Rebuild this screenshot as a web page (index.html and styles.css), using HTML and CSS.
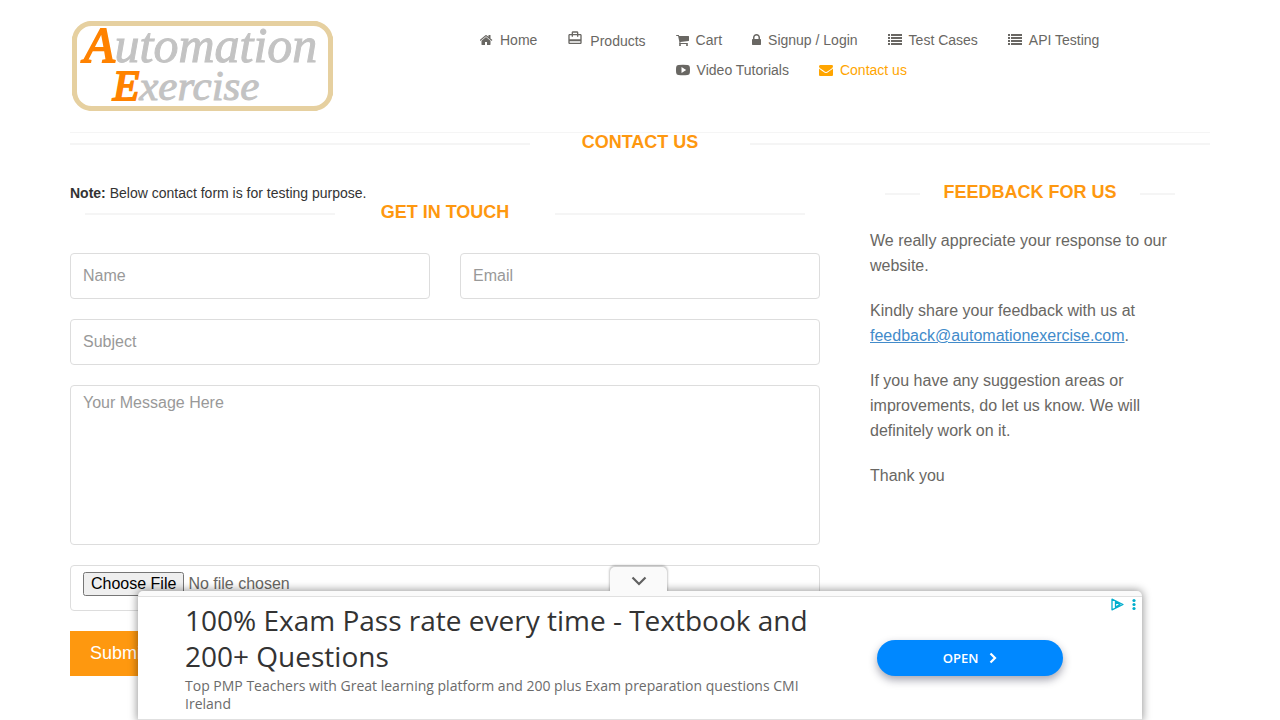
FILE: index.html
```html
<!DOCTYPE html>
<html lang="en">
<head>
<meta charset="utf-8">
<meta name="viewport" content="width=device-width, initial-scale=1">
<title>Automation Exercise - Contact Us</title>
<link rel="stylesheet" href="styles.css">
</head>
<body>
<header class="container header">
  <a class="logo" href="#" aria-label="Automation Exercise">
    <svg width="262" height="90" viewBox="0 0 262 90">
      <path d="M18 2.500H244L258.500 17V73L244 87.500H18L2.500 73V17Z" fill="#fff" stroke="#e6d0a0" stroke-width="5" stroke-linejoin="round"/>
      <rect x="2.500" y="2.500" width="256" height="85" rx="17" fill="#fff" stroke="#e6d0a0" stroke-width="5"/>
      <text class="logo-text" x="12" y="41" font-size="50"><tspan class="logo-initial">A</tspan>utomation</text>
      <text class="logo-text" x="41" y="79" font-size="43"><tspan class="logo-initial">E</tspan>xercise</text>
    </svg>
  </a>
  <nav class="nav">
    <ul class="nav-list">
      <li class="nav-item"><a class="nav-link" href="#"><svg width="13" height="14" viewBox="64 0 1664 1792"><path d="M1408 992v480q0 26-19 45t-45 19h-384v-384h-256v384h-384q-26 0-45-19t-19-45v-480q0-1 .5-3t.5-3l575-474 575 474q1 2 1 6zm223-69l-62 74q-8 9-21 11h-3q-13 0-21-7l-692-577-692 577q-12 8-24 7-13-2-21-11l-62-74q-8-10-7-23.500t11-21.500l719-599q32-26 76-26t76 26l244 204v-195q0-14 9-23t23-9h192q14 0 23 9t9 23v408l219 182q10 8 11 21.500t-7 23.500z"/></svg>Home</a></li>
      <li class="nav-item nav-item-tall"><a class="nav-link" href="#"><svg class="icon-bag" width="16" height="16" viewBox="0 0 24 24"><path d="M20 6h-3V4c0-1.110-.89-2-2-2H9c-1.110 0-2 .89-2 2v2H4c-1.110 0-2 .89-2 2v11c0 1.110.89 2 2 2h16c1.110 0 2-.89 2-2V8c0-1.110-.89-2-2-2zM9 4h6v2H9V4zm11 15H4v-2h16v2zm0-5H4V8h3v2h2V8h6v2h2V8h3v6z"/></svg>Products</a></li>
      <li class="nav-item"><a class="nav-link" href="#"><svg width="13" height="14" viewBox="64 0 1664 1792"><path d="M704 1536q0 52-38 90t-90 38-90-38-38-90 38-90 90-38 90 38 38 90zm896 0q0 52-38 90t-90 38-90-38-38-90 38-90 90-38 90 38 38 90zm128-1088v512q0 24-16.500 42.500t-40.500 21.500l-1044 122q13 60 13 70 0 16-24 64h920q26 0 45 19t19 45-19 45-45 19h-1024q-26 0-45-19t-19-45q0-11 8-31.500t16-36 21.500-40 15.500-29.500l-177-823h-204q-26 0-45-19t-19-45 19-45 45-19h256q16 0 28.500 6.500t19.500 15.500 13 24.500 8 26 5.500 29.500 4.500 26h1201q26 0 45 19t19 45z"/></svg>Cart</a></li>
      <li class="nav-item"><a class="nav-link" href="#"><svg width="9" height="14" viewBox="320 0 1152 1792"><path d="M640 768h512v-192q0-106-75-181t-181-75-181 75-75 181v192zm832 96v576q0 40-28 68t-68 28h-960q-40 0-68-28t-28-68v-576q0-40 28-68t68-28h32v-192q0-184 132-316t316-132 316 132 132 316v192h32q40 0 68 28t28 68z"/></svg>Signup / Login</a></li>
      <li class="nav-item"><a class="nav-link" href="#"><svg width="14" height="14" viewBox="0 0 14 14"><path d="M0 1h2v2H0zM3 1h11v2H3zM0 4h2v2H0zM3 4h11v2H3zM0 7h2v2H0zM3 7h11v2H3zM0 10h2v2H0zM3 10h11v2H3z"/></svg>Test Cases</a></li>
      <li class="nav-item"><a class="nav-link" href="#"><svg width="14" height="14" viewBox="0 0 14 14"><path d="M0 1h2v2H0zM3 1h11v2H3zM0 4h2v2H0zM3 4h11v2H3zM0 7h2v2H0zM3 7h11v2H3zM0 10h2v2H0zM3 10h11v2H3z"/></svg>API Testing</a></li>
      <li class="nav-item"><a class="nav-link" href="#"><svg width="14" height="14" viewBox="0 0 14 14"><path fill-rule="evenodd" d="M2.500 2Q7 1.600 11.500 2Q13.600 2.100 13.800 4Q14.200 7 13.800 10Q13.600 11.900 11.500 12Q7 12.400 2.500 12Q.4 11.900.2 10Q-.2 7 .2 4Q.4 2.100 2.500 2zM5.500 4v6l4.700-3z"/></svg>Video Tutorials</a></li>
      <li class="nav-item"><a class="nav-link active" href="#" aria-current="page"><svg width="14" height="14" viewBox="0 0 1792 1792"><path d="M1792 710v794q0 66-47 113t-113 47h-1472q-66 0-113-47t-47-113v-794q44 49 101 87 362 246 497 345 57 42 92.500 65.500t94.500 48 110 24.500h2q51 0 110-24.500t94.500-48 92.500-65.500q170-123 498-345 57-39 100-87zm0-294q0 79-49 151t-122 123q-376 261-468 325-10 7-42.500 31t-54 38.500-52 32.500-57.500 27-50 9h-2q-23 0-50-9t-57.500-27-52-32.500-54-38.500-42.500-31q-91-64-262-182.500t-205-142.500q-62-42-117-115.500t-55-136.500q0-78 41.500-130t118.500-52h1472q65 0 112.500 47t47.500 113z"/></svg>Contact us</a></li>
    </ul>
  </nav>
</header>

<main class="container main">
  <h2 class="title">Contact Us</h2>
  <div class="columns">
    <section>
      <p class="note"><b>Note:</b> Below contact form is for testing purpose.</p>
      <h2 class="title title-inset">Get In Touch</h2>
      <form class="form">
        <input class="field" type="text" placeholder="Name" aria-label="Name">
        <input class="field" type="email" placeholder="Email" aria-label="Email">
        <input class="field wide" type="text" placeholder="Subject" aria-label="Subject">
        <textarea class="field message wide" placeholder="Your Message Here" aria-label="Your Message Here"></textarea>
        <input class="field wide" type="file" aria-label="Upload file">
        <button class="submit" type="submit">Submit</button>
      </form>
    </section>
    <section class="feedback">
      <h2 class="title title-inset">Feedback For Us</h2>
      <p>We really appreciate your response to our website.</p>
      <p>Kindly share your feedback with us at <a class="mail" href="mailto:feedback@automationexercise.com">feedback@automationexercise.com</a>.</p>
      <p>If you have any suggestion areas or improvements, do let us know. We will definitely work on it.</p>
      <p>Thank you</p>
    </section>
  </div>
</main>

<aside class="ad" aria-label="Advertisement">
  <button class="ad-toggle" type="button" aria-label="Collapse advertisement"><svg width="16" height="10" viewBox="0 0 16 10"><path d="M1.500 1.500L8 8l6.500-6.500" fill="none" stroke="#616161" stroke-width="2.200"/></svg></button>
  <div class="ad-body">
    <div class="ad-copy">
      <h3 class="ad-title">100% Exam Pass rate every time - Textbook and 200+ Questions</h3>
      <p class="ad-text">Top PMP Teachers with Great learning platform and 200 plus Exam preparation questions CMI Ireland</p>
    </div>
    <a class="ad-open" href="#">OPEN <svg width="8" height="12" viewBox="0 0 8 12"><path d="M1.500 1.500L6 6l-4.500 4.500" fill="none" stroke="#fff" stroke-width="2.200"/></svg></a>
    <div class="ad-marks">
      <svg width="13" height="13" viewBox="0 0 13 13"><path d="M1 1.200v10.600L12 6.500zM4.500 3v7M4.500 4.200L9 6.500 4.500 9" fill="none" stroke="#00aecd" stroke-width="1.300" stroke-linejoin="round"/></svg>
      <svg width="4" height="13" viewBox="0 0 4 13"><g fill="#00aecd"><circle cx="2" cy="2.500" r="1.600"/><circle cx="2" cy="6.500" r="1.600"/><circle cx="2" cy="10.500" r="1.600"/></g></svg>
    </div>
  </div>
</aside>
</body>
</html>
```

FILE: styles.css
```css
* { box-sizing: border-box; }

body {
  margin: 0;
  background: #fff;
  color: #333;
  font: 14px/20px "Liberation Sans", Arial, sans-serif;
}

h2, h3, p, ul { margin: 0; padding: 0; }

.container {
  max-width: 1140px;
  margin: 0 auto;
}

.header {
  display: flex;
  align-items: flex-start;
  gap: 116px;
  padding: 21px 0 21px 2px;
}

.logo { flex: none; }
.logo svg { display: block; overflow: visible; }
.logo-text {
  font-family: "Liberation Serif", serif;
  font-style: italic;
  fill: #c3c3c3;
  stroke: #c3c3c3;
  stroke-width: 1px;
}
.logo-initial { fill: #ff8200; stroke: #ff8200; stroke-width: 2px; }

.nav { flex: 1; padding: 9px 15px 0 0; }
.nav-list { list-style: none; }
.nav-item {
  float: left;
  margin-bottom: 10px;
  padding-left: 30px;
}
.nav-item-tall { padding-top: 1px; padding-bottom: 4px; }
.nav-link {
  display: flex;
  align-items: center;
  gap: 7px;
  color: #696763;
  text-decoration: none;
}
.nav-link svg { fill: currentColor; }
.nav-link .icon-bag { align-self: flex-start; margin-top: -1px; }
.nav-link.active { color: orange; }

.main { border-top: 1px solid #f5f5f5; }

.title {
  display: grid;
  grid-template-columns: 1fr 220px 1fr;
  align-items: center;
  color: #fe980f;
  font-size: 18px;
  line-height: 18px;
  font-weight: 700;
  text-align: center;
  text-transform: uppercase;
}
.title::before,
.title::after {
  content: "";
  height: 2px;
  margin-top: 4px;
  background: #f5f5f5;
}
.title-inset { margin: 0 15px; }

.columns {
  display: grid;
  grid-template-columns: minmax(0, 1fr) 320px;
  gap: 50px;
  padding: 32px 20px 44px 0;
}

.form {
  display: grid;
  grid-template-columns: 1fr 1fr;
  gap: 20px 30px;
  margin-top: 32px;
}
.field {
  width: 100%;
  height: 46px;
  padding: 6px 12px;
  border: 1px solid #ddd;
  border-radius: 4px;
  background: #fff;
  color: #696763;
  font: 16px/20px "Liberation Sans", Arial, sans-serif;
}
.field::placeholder { color: #999; }
.wide { grid-column: 1 / -1; }
.message { display: block; height: 160px; line-height: 22px; resize: none; }
.submit {
  justify-self: start;
  padding: 12px 20px;
  border: 0;
  background: #fe980f;
  color: #fff;
  font: 18px/21px "Liberation Sans", Arial, sans-serif;
}

.feedback { color: #696763; font-size: 16px; line-height: 25px; }
.feedback .title { margin-bottom: 27px; }
.feedback p { margin-bottom: 20px; }
.mail { color: #428bca; text-decoration: underline; }

.ad {
  position: fixed;
  left: 0;
  right: 0;
  bottom: 0;
  width: 1004px;
  max-width: 100%;
  margin: 0 auto;
  padding-top: 5px;
  border-radius: 5px 5px 0 0;
  background: #fafafa;
  box-shadow: 0 0 8px 1px rgba(0, 0, 0, 0.4);
  font-family: "Open Sans", "Noto Sans", sans-serif;
}
.ad-toggle {
  position: absolute;
  bottom: 100%;
  left: 472px;
  width: 57px;
  height: 24px;
  padding: 0;
  border: 0;
  border-radius: 5px 5px 0 0;
  background: #fafafa;
  box-shadow: 0 -1px 2px 1px rgba(0, 0, 0, 0.2);
  clip-path: inset(-8px -8px 0 -8px);
}
.ad-toggle svg { display: block; margin: 4px auto 0; }
.ad-body {
  display: flex;
  align-items: center;
  gap: 48px;
  padding: 5px 6px 6px 47px;
  border: 1px solid #e0e0e0;
  border-width: 1px 0;
  background: #fff;
}
.ad-copy { flex: 1; }
.ad-title {
  color: #333;
  font-size: 28px;
  line-height: 36px;
  font-weight: 400;
}
.ad-text {
  margin-top: 3px;
  color: #6b6b6b;
  font-size: 14px;
  line-height: 18px;
}
.ad-open {
  display: flex;
  align-items: center;
  justify-content: center;
  gap: 11px;
  width: 186px;
  height: 36px;
  border-radius: 18px;
  background: #0088ff;
  box-shadow: 0 4px 9px rgba(30, 30, 60, 0.4);
  color: #fff;
  font-size: 13px;
  font-weight: 600;
  text-decoration: none;
}
.ad-marks {
  display: flex;
  align-self: flex-start;
  gap: 8px;
  margin-top: -4px;
}
```
